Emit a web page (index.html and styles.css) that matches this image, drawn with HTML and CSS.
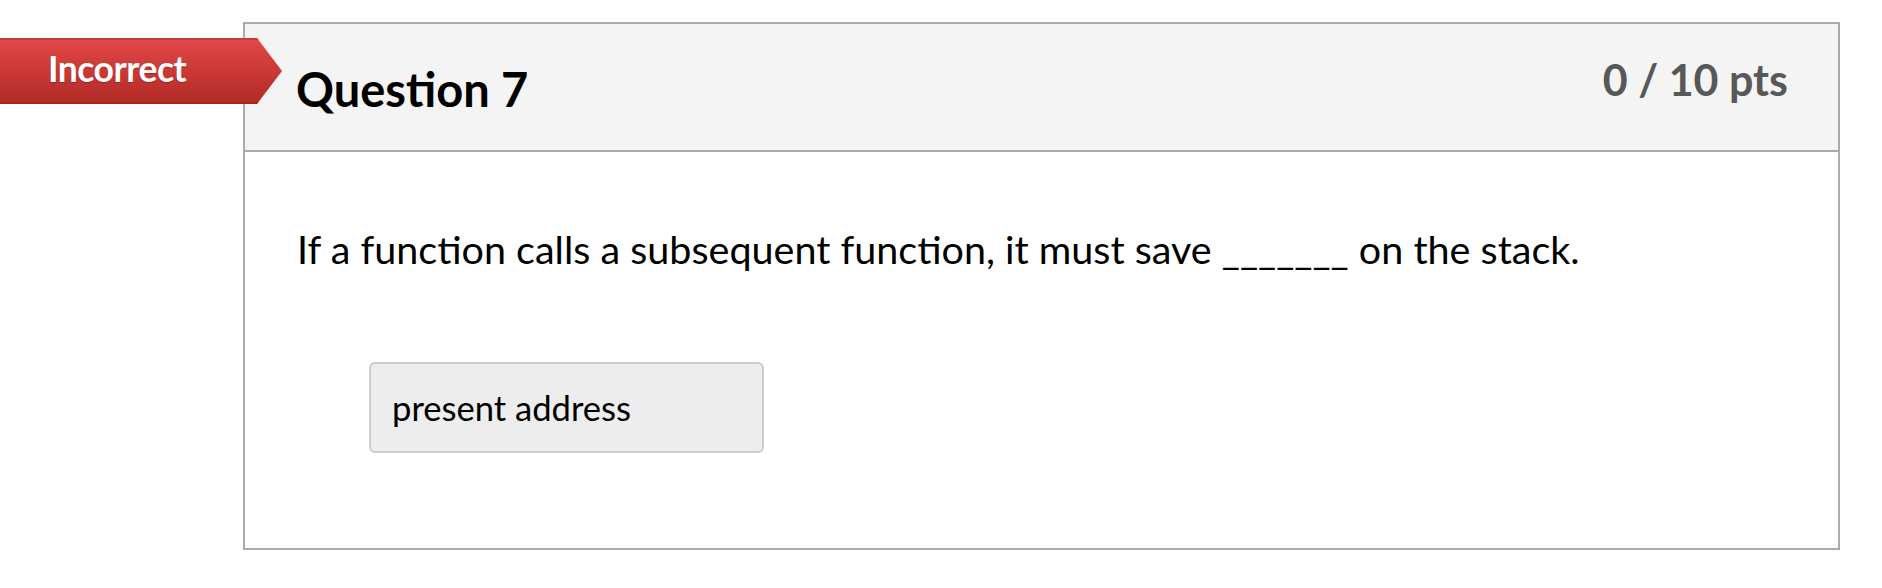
FILE: index.html
```html
<!DOCTYPE html>
<html lang="en">
<head>
<meta charset="utf-8">
<title>Question 7</title>
<link rel="stylesheet" href="styles.css">
</head>
<body>
<div class="page">
  <div class="question">
    <div class="ribbon"><span class="ribbon-text">Incorrect</span></div>
    <div class="q-header">
      <h2 class="q-title">Question 7</h2>
      <span class="q-points">0 / 10 pts</span>
    </div>
    <div class="q-body">
      <p class="q-text">If a function calls a subsequent function, it must save _______ on the stack.</p>
      <div class="answer">present address</div>
    </div>
  </div>
</div>
</body>
</html>
```
FILE: styles.css
```css
html, body {
  margin: 0;
  padding: 0;
  background: #ffffff;
}
body {
  font-family: Lato, "Noto Sans", sans-serif;
  color: #000;
}
.page {
  padding: 22px 0 0 243px;
}
.question {
  position: relative;
  box-sizing: border-box;
  width: 1597px;
  height: 528px;
  border: 2px solid #aaaaaa;
  background: #fff;
}
.ribbon {
  position: absolute;
  left: -245px;
  top: 14px;
  width: 282px;
  height: 66px;
  box-sizing: border-box;
  clip-path: polygon(0 0, 257px 0, 282px 50%, 257px 100%, 0 100%);
  background: linear-gradient(#e34848, #b12a25);
  box-shadow: inset 0 2px 0 #c23c3c, inset 0 -2px 0 #a62520;
  display: flex;
  align-items: center;
  padding-left: 48px;
}
.ribbon-text {
  color: #fff;
  font-weight: 700;
  font-size: 35.5px;
  letter-spacing: -0.5px;
  text-shadow: 0 1px 1px rgba(0,0,0,0.25);
  margin-top: -6px;
}
.q-header {
  display: flex;
  justify-content: space-between;
  align-items: flex-start;
  background: #f4f4f4;
  height: 128px;
  box-sizing: border-box;
  border-bottom: 2px solid #aaaaaa;
  padding: 0 50px 0 51px;
}
.q-title {
  margin: 0;
  padding-top: 42px;
  font-size: 47px;
  font-weight: 700;
  line-height: 1;
}
.q-points {
  padding-top: 34px;
  font-size: 43px;
  font-weight: 700;
  color: #585858;
  line-height: 1;
}
.q-body {
  padding: 0 0 0 52px;
}
.q-text {
  margin: 0;
  padding-top: 73px;
  font-size: 39.5px;
  line-height: 1.2;
}
.answer {
  margin: 90px 0 0 72px;
  width: 395px;
  height: 91px;
  box-sizing: border-box;
  background: #ededed;
  border: 2px solid #cccccc;
  border-radius: 6px;
  padding: 0 0 0 21px;
  display: flex;
  align-items: center;
  font-size: 34.6px;
}
```
